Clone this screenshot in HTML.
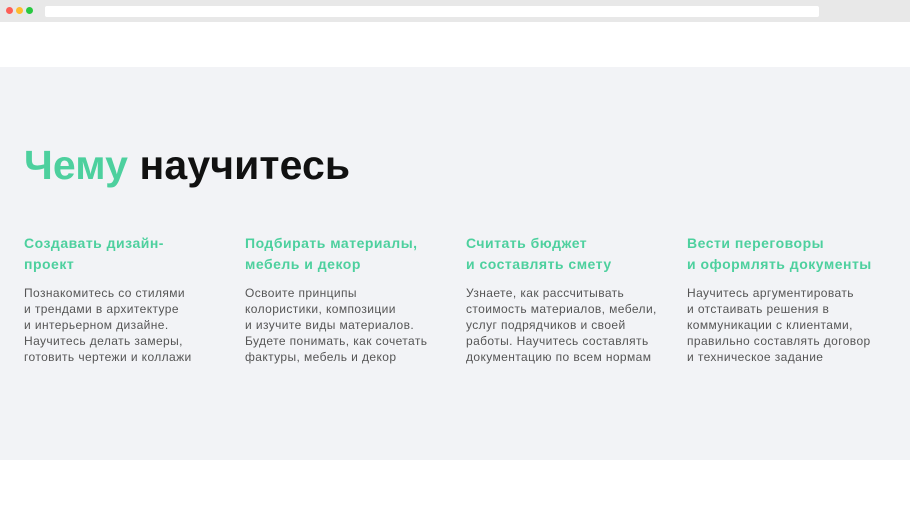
<!DOCTYPE html>
<html><head><meta charset="utf-8"><style>
*{margin:0;padding:0;box-sizing:border-box}
body{width:910px;height:517px;background:#fff;font-family:"Liberation Sans",sans-serif;position:relative;overflow:hidden}
.bar{position:absolute;left:0;top:0;width:910px;height:22px;background:#e8e8e8}
.dot{position:absolute;top:7px;width:7px;height:7px;border-radius:50%}
.url{position:absolute;left:45px;top:6px;width:774px;height:11px;background:#fff;border-radius:2px}
.sec{position:absolute;left:0;top:67px;width:910px;height:393px;background:#f2f3f6}
h1{position:absolute;left:24px;top:140px;font-size:41px;font-weight:bold;color:#111;letter-spacing:0.1px;line-height:50px}
h1 span{color:#4dd09e}
.col{position:absolute;top:233px;width:220px}
.col h3{font-size:14px;font-weight:bold;color:#4dd09e;line-height:21px;height:42px;letter-spacing:0.5px}
.col p{margin-top:10px;font-size:12px;line-height:16px;color:#555;letter-spacing:0.4px}
</style></head><body>
<div class="bar"><div class="dot" style="left:6px;background:#fd5f57"></div><div class="dot" style="left:16px;background:#febc2e"></div><div class="dot" style="left:26px;background:#28c840"></div><div class="url"></div></div>
<div class="sec"></div>
<h1><span>Чему</span> научитесь</h1>
<div class="col" style="left:24px"><h3>Создавать дизайн-<br>проект</h3><p>Познакомитесь со стилями<br>и трендами в архитектуре<br>и интерьерном дизайне.<br>Научитесь делать замеры,<br>готовить чертежи и коллажи</p></div>
<div class="col" style="left:245px"><h3>Подбирать материалы,<br>мебель и декор</h3><p>Освоите принципы<br>колористики, композиции<br>и изучите виды материалов.<br>Будете понимать, как сочетать<br>фактуры, мебель и декор</p></div>
<div class="col" style="left:466px"><h3>Считать бюджет<br>и составлять смету</h3><p>Узнаете, как рассчитывать<br>стоимость материалов, мебели,<br>услуг подрядчиков и своей<br>работы. Научитесь составлять<br>документацию по всем нормам</p></div>
<div class="col" style="left:687px"><h3>Вести переговоры<br>и оформлять документы</h3><p>Научитесь аргументировать<br>и отстаивать решения в<br>коммуникации с клиентами,<br>правильно составлять договор<br>и техническое задание</p></div>
</body></html>
